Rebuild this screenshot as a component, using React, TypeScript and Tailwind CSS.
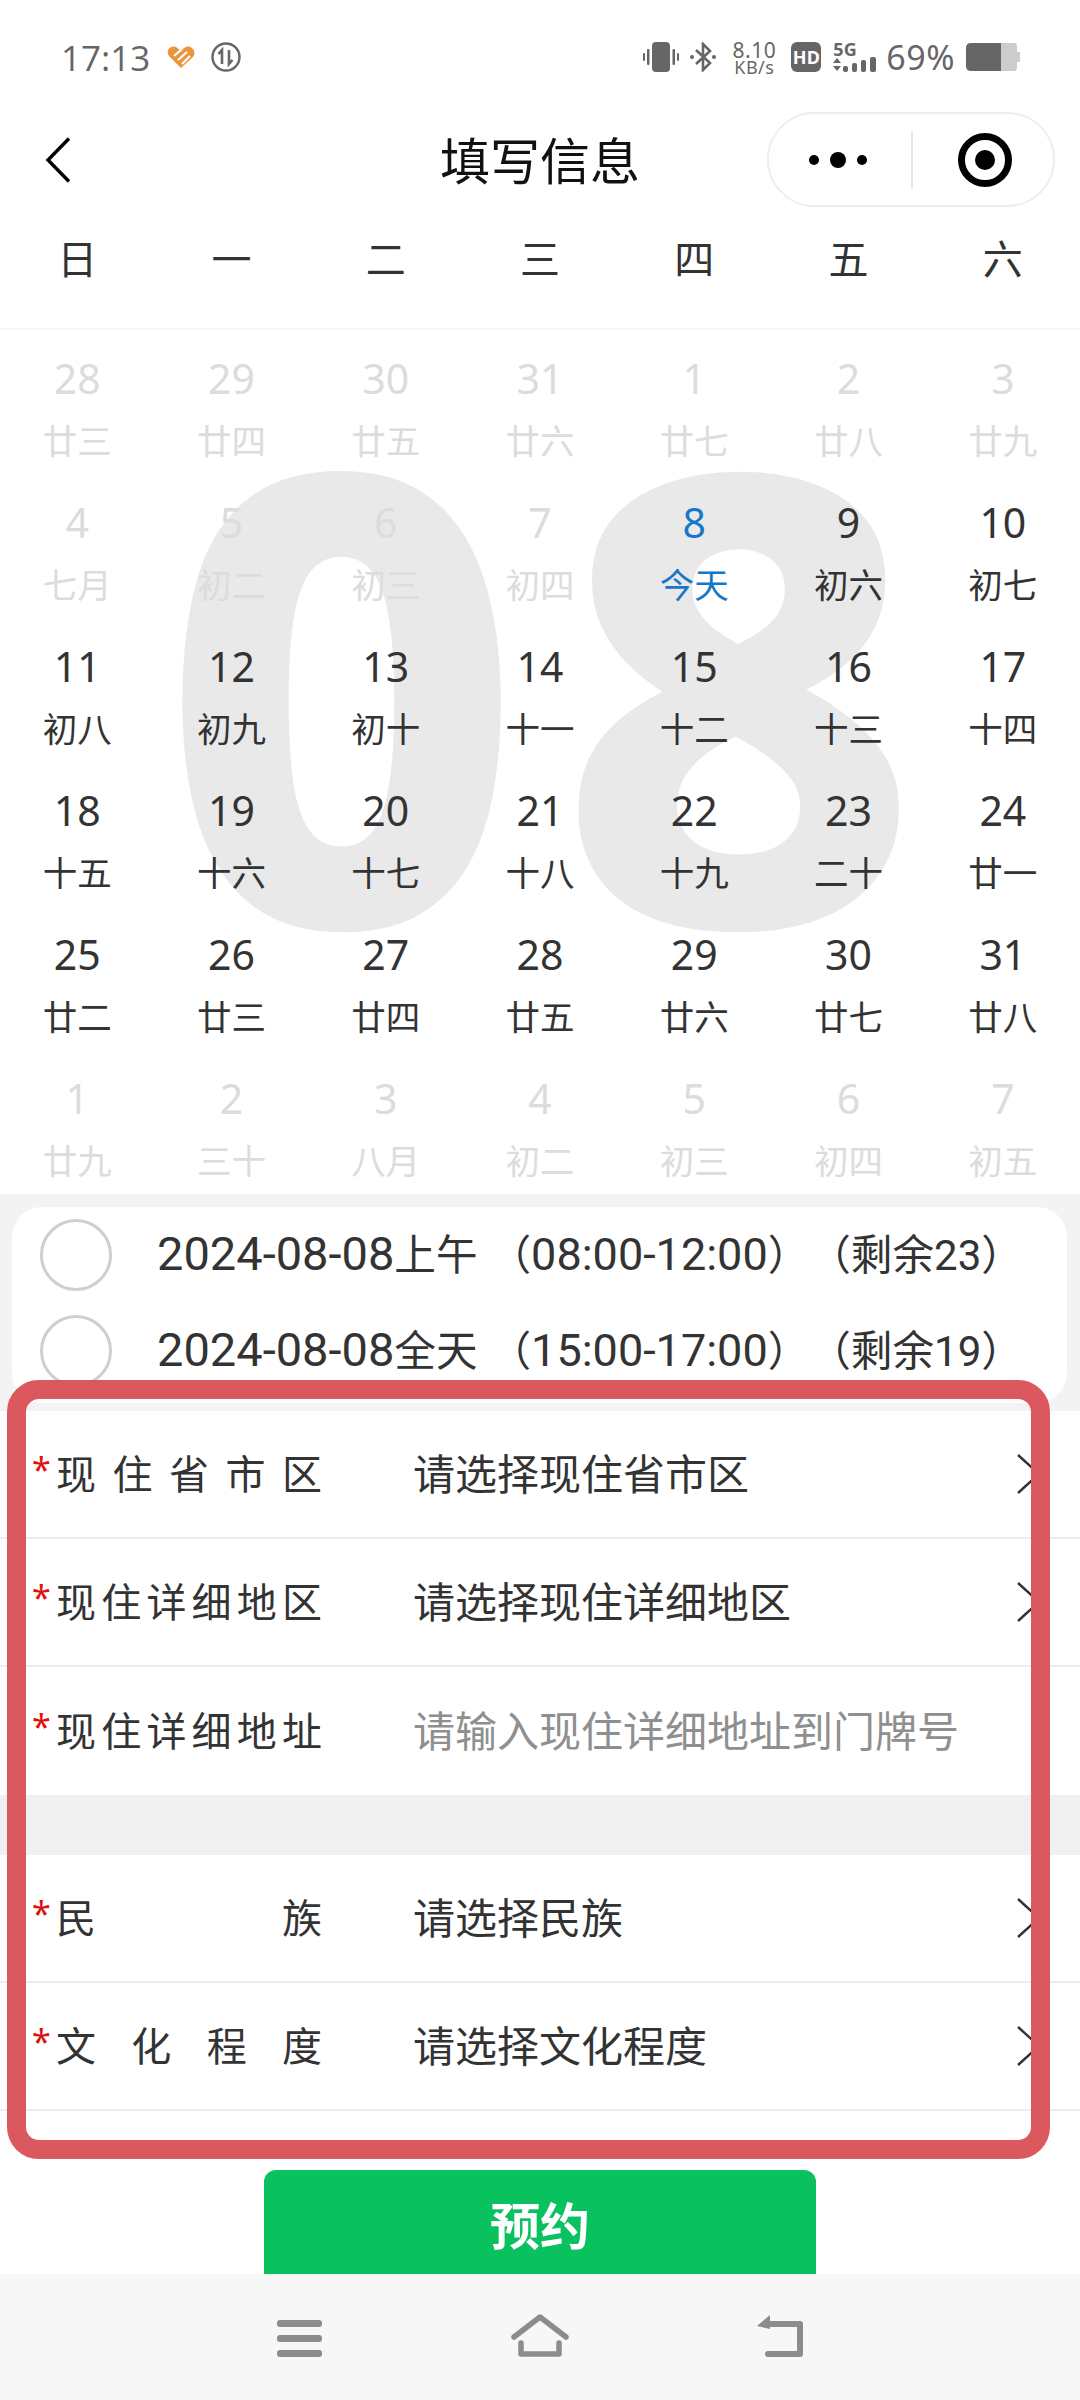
import React from "react";

const font = { fontFamily: '"Noto Sans", "Noto Sans CJK SC", sans-serif' };

type Day = { n: number; l: string; muted?: boolean; today?: boolean };

const mute = (n: number, l: string): Day => ({ n, l, muted: true });
const day = (n: number, l: string): Day => ({ n, l });

const days: Day[] = [
  mute(28, "廿三"), mute(29, "廿四"), mute(30, "廿五"), mute(31, "廿六"), mute(1, "廿七"), mute(2, "廿八"), mute(3, "廿九"),
  mute(4, "七月"), mute(5, "初二"), mute(6, "初三"), mute(7, "初四"), { n: 8, l: "今天", today: true }, day(9, "初六"), day(10, "初七"),
  day(11, "初八"), day(12, "初九"), day(13, "初十"), day(14, "十一"), day(15, "十二"), day(16, "十三"), day(17, "十四"),
  day(18, "十五"), day(19, "十六"), day(20, "十七"), day(21, "十八"), day(22, "十九"), day(23, "二十"), day(24, "廿一"),
  day(25, "廿二"), day(26, "廿三"), day(27, "廿四"), day(28, "廿五"), day(29, "廿六"), day(30, "廿七"), day(31, "廿八"),
  mute(1, "廿九"), mute(2, "三十"), mute(3, "八月"), mute(4, "初二"), mute(5, "初三"), mute(6, "初四"), mute(7, "初五"),
];

const weekdays = ["日", "一", "二", "三", "四", "五", "六"];

const StatusBar = () => (
  <div className="flex h-[112px] items-center pl-[61px] pr-[60px] pt-[2px] text-[#666666]">
    <span className="text-[35px] font-medium leading-none" style={{ fontFamily: '"Open Sans", sans-serif' }}>17:13</span>
    <svg width="28" height="24" viewBox="0 0 28 24" className="ml-[17px]">
      <path d="M14 23 L2 11 C-2 5 4 0 9 2 L14 6 C18 0 25 0 27 6 C28 9 27 10 26 12 Z" fill="#e8963c" />
      <path d="M7 11 L15 4 M11 15 L20 7 M15 19 L23 11" stroke="#fff" strokeWidth="2" />
    </svg>
    <svg width="30" height="30" viewBox="0 0 30 30" className="ml-[16px]" fill="none" stroke="#666666">
      <circle cx="15" cy="15" r="13.5" strokeWidth="2.4" />
      <path d="M11 22 V8 L7.5 12 M18 8 V22 L21.5 18" strokeWidth="2.6" />
    </svg>
    <div className="ml-auto flex items-center">
      <svg width="36" height="30" viewBox="0 0 36 30" fill="#666666">
        <rect x="9" y="0" width="18" height="30" rx="4" />
        <rect x="0" y="11" width="2" height="8" rx="1" />
        <rect x="4" y="7" width="2.5" height="16" rx="1" />
        <rect x="29.5" y="7" width="2.5" height="16" rx="1" />
        <rect x="34" y="11" width="2" height="8" rx="1" />
      </svg>
      <svg width="26" height="30" viewBox="0 0 26 30" fill="none" stroke="#666666" className="ml-[11px]">
        <path d="M6 8 L20 21 L13 28 V2 L20 9 L6 22" strokeWidth="2.6" />
        <circle cx="2" cy="15" r="2" fill="#666666" stroke="none" />
        <circle cx="24" cy="15" r="2" fill="#666666" stroke="none" />
      </svg>
      <div className="ml-[16px] flex w-[44px] flex-col items-center">
        <span className="text-[21px] leading-[20px] tracking-[0.5px]">8.10</span>
        <span className="text-[18px] leading-[15px] tracking-[0.5px]">KB/s</span>
      </div>
      <div className="ml-[15px] flex h-[30px] w-[30px] items-center justify-center rounded-[6px] bg-[#666666] text-[18px] font-bold leading-none text-white">
        HD
      </div>
      <div className="ml-[12px] flex w-[44px] flex-col">
        <span className="text-[18px] font-bold leading-[15px]">5G</span>
        <svg width="44" height="15" viewBox="0 0 44 15" fill="#666666">
          <path d="M0 6 L4 1 L8 6 Z M0 9 L8 9 L4 14 Z" />
          <rect x="10" y="9" width="5" height="6" rx="2" />
          <rect x="19" y="6" width="5" height="9" rx="2" />
          <rect x="28" y="3" width="5" height="12" rx="2" />
          <rect x="37" y="0" width="6" height="15" rx="2" />
        </svg>
      </div>
      <span className="ml-[9px] text-[34px] leading-none tracking-[0.5px]">69%</span>
      <svg width="54" height="28" viewBox="0 0 54 28" className="ml-[11px]">
        <path d="M35 0 H48 Q51 0 51 4 V9 H54 V19 H51 V24 Q51 28 48 28 H35 Z" fill="#cccccc" />
        <path d="M35 0 H5 Q0 0 0 5 V23 Q0 28 5 28 H35 Z" fill="#666666" />
      </svg>
    </div>
  </div>
);

const TitleBar = () => (
  <div className="grid h-[95px] grid-cols-[1fr_auto_1fr] items-center">
    <div className="pl-[45px]">
      <svg width="26" height="46" viewBox="0 0 26 46" fill="none" stroke="#000000" strokeWidth="3.4">
        <path d="M24 1.5 L3 23 L24 44.5" />
      </svg>
    </div>
    <span className="pt-[3px] text-[50px] leading-none text-[#111111]">填写信息</span>
    <div className="flex justify-end pr-[25px]">
      <div className="flex h-[95px] w-[288px] items-center rounded-[48px] border-2 border-[#eeeeee] bg-white">
        <svg width="58" height="18" viewBox="0 0 58 18" className="ml-[40px]">
          <circle cx="5" cy="9" r="5" fill="#000" />
          <circle cx="29" cy="9" r="8" fill="#000" />
          <circle cx="53" cy="9" r="5" fill="#000" />
        </svg>
        <div className="ml-[44px] h-[56px] w-[2px] bg-[#e6e6e6]" />
        <svg width="54" height="54" viewBox="0 0 54 54" className="ml-[45px]" fill="none">
          <circle cx="27" cy="27" r="23.5" stroke="#000" strokeWidth="7" />
          <circle cx="27" cy="27" r="10" fill="#000" />
        </svg>
      </div>
    </div>
  </div>
);

const Calendar = () => (
  <div className="relative h-[866px] overflow-hidden border-t-2 border-[#f6f6f6]">
    <div className="absolute left-0 right-0 top-[3px] pl-[34px] text-center text-[628px] font-extrabold leading-[700px] tracking-[34px] text-[#e9e9e9]">
      08
    </div>
    <div className="relative grid grid-cols-7">
      {days.map((d, i) => (
        <div key={i} className="flex h-[144px] flex-col items-center pt-[18px]">
          <span
            className={`h-[60px] text-[41px] leading-[60px] ${
              d.today ? "text-[#1677c9]" : d.muted ? "text-[#dcdcdc]" : "text-[#333333]"
            }`}
          >
            {d.n}
          </span>
          <span
            className={`mt-[3px] h-[60px] text-[34.5px] leading-[60px] ${
              d.today ? "text-[#1677c9]" : d.muted ? "text-[#dcdcdc]" : "text-[#333333]"
            }`}
          >
            {d.l}
          </span>
        </div>
      ))}
    </div>
  </div>
);

const slots = [
  { date: "2024-08-08", part: "上午", time: "08:00-12:00", left: "23" },
  { date: "2024-08-08", part: "全天", time: "15:00-17:00", left: "19" },
];

const roboto = { fontFamily: "Roboto, sans-serif" };

const Slots = () => (
  <div className="bg-[#f3f3f3] pb-[8px] pl-[12px] pr-[13px] pt-[13px]">
    <div className="flex h-[196px] flex-col rounded-[30px] bg-white pl-[28px]">
      {slots.map((s) => (
        <div key={s.part} className="flex h-[96px] items-center">
          <div className="h-[72px] w-[72px] rounded-full border-[3px] border-[#cfcfcf]" />
          <span className="-mt-[3px] ml-[45px] whitespace-nowrap text-[41.6px] leading-none text-[#333333] [text-spacing-trim:space-all]">
            <span className="text-[47px]" style={roboto}>{s.date}</span>
            {s.part}
            <span className="ml-[12px]">（</span>
            <span className="text-[45px]" style={roboto}>{s.time}</span>）（剩余
            <span className="text-[42px]" style={roboto}>{s.left}</span>）
          </span>
        </div>
      ))}
    </div>
  </div>
);

const Chevron = () => (
  <svg width="25" height="40" viewBox="0 0 25 40" fill="none" stroke="#333333" strokeWidth="2.4" className="ml-auto mr-[39px]">
    <path d="M2 1 L23 20 L2 39" />
  </svg>
);

const Row = ({
  label,
  value,
  placeholder,
  divider = true,
}: {
  label: string;
  value: string;
  placeholder?: boolean;
  divider?: boolean;
}) => (
  <div className={`flex h-[128px] items-center pl-[32px] ${divider ? "border-b-2 border-[#eeeeee]" : ""}`}>
    <span className="-mt-[10px] w-[24px] text-[34px] leading-none text-[#e01010]">*</span>
    <span className="w-[266px] text-[40px] leading-none text-[#333333] [text-align-last:justify]">{label}</span>
    <span className={`ml-[91px] text-[42px] leading-none ${placeholder ? "text-[#8f8f8f]" : "text-[#333333]"}`}>
      {value}
    </span>
    {!placeholder && <Chevron />}
  </div>
);

const NavBar = () => (
  <div className="flex h-[126px] items-center justify-center bg-[#f7f7f7]">
    <div className="flex -translate-y-[2px] items-end">
      <svg width="45" height="37" viewBox="0 0 45 37" fill="#8c8c8c">
        <rect x="0" y="0" width="45" height="7" rx="3" />
        <rect x="0" y="15" width="45" height="7" rx="3" />
        <rect x="0" y="30" width="45" height="7" rx="3" />
      </svg>
      <svg width="58" height="43" viewBox="0 0 58 43" fill="none" stroke="#8c8c8c" strokeWidth="5.5" strokeLinecap="round" strokeLinejoin="round" className="ml-[189px]">
        <path d="M3 23 L29 3 L55 23" />
        <path d="M10 29 V40 H48 V29" />
      </svg>
      <svg width="48" height="42" viewBox="0 0 48 42" fill="none" className="ml-[187px]">
        <path d="M9 9 H44 V39 H12" stroke="#8c8c8c" strokeWidth="6" strokeLinecap="round" strokeLinejoin="round" />
        <path d="M14 0 L1 11 L14 14 Z" fill="#8c8c8c" />
      </svg>
    </div>
  </div>
);

export default function App() {
  return (
    <div className="relative flex h-[2400px] w-[1080px] flex-col overflow-hidden bg-white" style={font}>
      <StatusBar />
      <TitleBar />
      <div className="grid h-[121px] grid-cols-7 pb-[17px]">
        {weekdays.map((w) => (
          <div key={w} className="flex items-center justify-center text-[40px] leading-none text-[#333333]">
            {w}
          </div>
        ))}
      </div>
      <Calendar />
      <Slots />
      <div className="bg-white">
        <Row label="现住省市区" value="请选择现住省市区" />
        <Row label="现住详细地区" value="请选择现住详细地区" />
        <Row label="现住详细地址" value="请输入现住详细地址到门牌号" placeholder divider={false} />
        <div className="h-[60px] bg-[#f0f0f0]" />
        <Row label="民族" value="请选择民族" />
        <Row label="文化程度" value="请选择文化程度" />
      </div>
      <div className="mt-auto flex justify-center">
        <div className="flex h-[104px] w-[552px] items-center justify-center rounded-t-[12px] bg-[#0ac160] pt-[8px] text-[50px] font-bold leading-none text-white">
          预约
        </div>
      </div>
      <NavBar />
      {/* red annotation box drawn over the form */}
      <div className="absolute left-[7px] top-[1380px] h-[779px] w-[1043px] rounded-[32px] border-[19px] border-[#dc585f]" />
    </div>
  );
}
